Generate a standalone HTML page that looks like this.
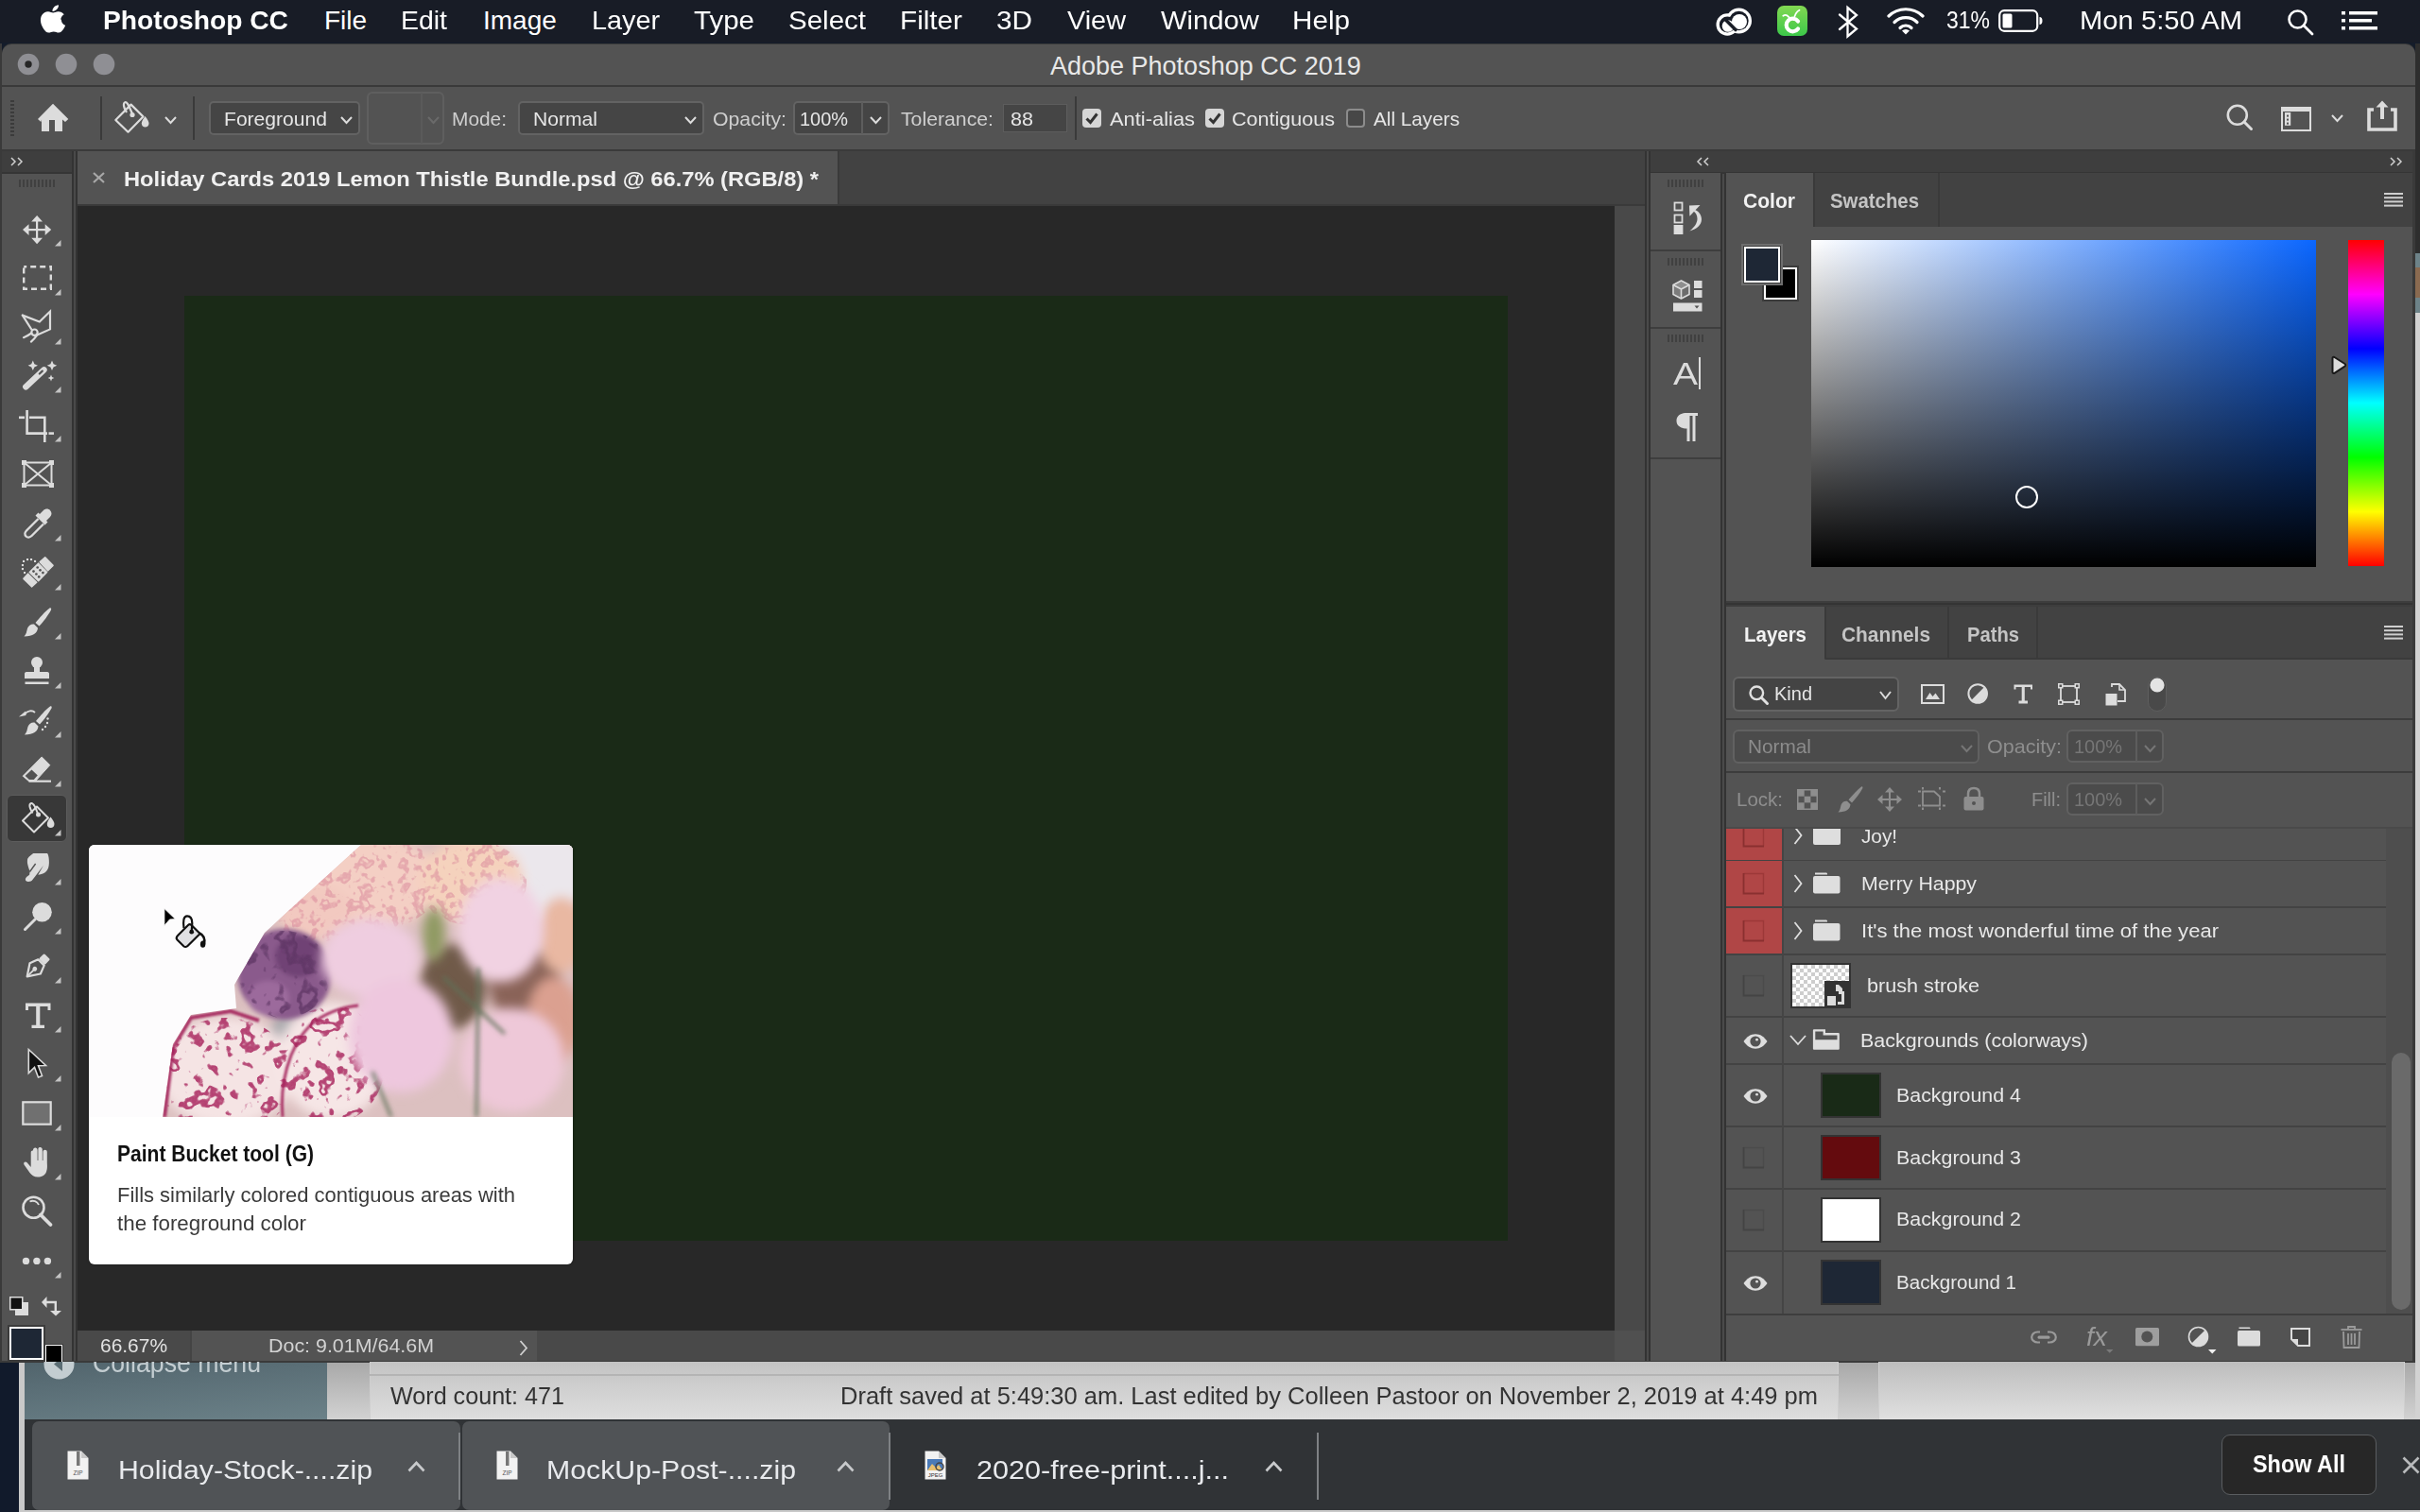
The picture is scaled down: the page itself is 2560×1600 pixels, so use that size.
<!DOCTYPE html>
<html><head><meta charset="utf-8">
<style>
*{margin:0;padding:0;box-sizing:border-box}
html,body{width:2560px;height:1600px;overflow:hidden;background:#141c2a;font-family:"Liberation Sans",sans-serif;position:relative}
.a{position:absolute}
.t{position:absolute;white-space:pre;line-height:1}
svg{position:absolute;overflow:visible}
</style></head><body>
<div class="a" style="left:0px;top:1380px;width:20px;height:220px;background:#111a2b;"></div>
<div class="a" style="left:20px;top:1380px;width:2540px;height:220px;background:#c9c9c9;"></div>
<div class="a" style="left:26px;top:1380px;width:320px;height:122px;background:linear-gradient(175deg,#3e4f57 0%,#5a6e76 60%,#6b8188 100%);"></div>
<div class="a" style="left:346px;top:1380px;width:2214px;height:122px;background:linear-gradient(180deg,#a8a8a8 0%,#a8a8a8 50%,#d2d2d2 100%);"></div>
<div class="a" style="left:26px;top:1502px;width:2534px;height:96px;background:#303336;"></div>
<div class="a" style="left:2px;top:46px;width:2553px;height:1396px;background:#3a3a3a;border-radius:10px 10px 0 0"></div>
<div class="a" style="left:2px;top:47px;width:2553px;height:43px;background:#535353;border-radius:10px 10px 0 0"></div>
<div class="a" style="left:2px;top:92px;width:2553px;height:66px;background:#535353;"></div>
<div class="a" style="left:2px;top:160px;width:74px;height:22px;background:#3e3e3e;"></div>
<div class="a" style="left:2px;top:183px;width:74px;height:1257px;background:#535353;"></div>
<div class="a" style="left:82px;top:160px;width:1658px;height:56px;background:#424242;"></div>
<div class="a" style="left:82px;top:160px;width:804px;height:56px;background:#535353;"></div>
<div class="a" style="left:886px;top:160px;width:2px;height:56px;background:#3a3a3a;"></div>
<div class="a" style="left:82px;top:218px;width:1626px;height:1190px;background:#282828;"></div>
<div class="a" style="left:1708px;top:218px;width:32px;height:1190px;background:#494949;"></div>
<div class="a" style="left:82px;top:1408px;width:1626px;height:32px;background:#494949;"></div>
<div class="a" style="left:1708px;top:1408px;width:32px;height:32px;background:#505050;"></div>
<div class="a" style="left:1740px;top:160px;width:6px;height:1280px;background:#4a4a4a;"></div>
<div class="a" style="left:1740px;top:160px;width:1.6px;height:1280px;background:#333333;"></div>
<div class="a" style="left:1744.4px;top:160px;width:1.6px;height:1280px;background:#333333;"></div>
<div class="a" style="left:1820px;top:183px;width:6px;height:1257px;background:#4a4a4a;"></div>
<div class="a" style="left:1820px;top:183px;width:1.6px;height:1257px;background:#333333;"></div>
<div class="a" style="left:1824.4px;top:183px;width:1.6px;height:1257px;background:#333333;"></div>
<div class="a" style="left:1746px;top:160px;width:806px;height:22px;background:#3e3e3e;"></div>
<div class="a" style="left:1746px;top:182px;width:806px;height:1.8px;background:#353535;"></div>
<div class="a" style="left:2px;top:182px;width:74px;height:1.8px;background:#353535;"></div>
<div class="a" style="left:76px;top:160px;width:6px;height:1280px;background:#4a4a4a;"></div>
<div class="a" style="left:76px;top:160px;width:1.6px;height:1280px;background:#333333;"></div>
<div class="a" style="left:80.4px;top:160px;width:1.6px;height:1280px;background:#333333;"></div>
<div class="a" style="left:1746px;top:160px;width:74px;height:22px;background:#3e3e3e;"></div>
<div class="a" style="left:1746px;top:183px;width:74px;height:1257px;background:#535353;"></div>
<div class="a" style="left:1826px;top:160px;width:726px;height:22px;background:#3e3e3e;"></div>
<div class="a" style="left:0px;top:0px;width:2560px;height:45px;background:#181c26;"></div>
<svg style="left:41px;top:3px;" width="29" height="33" viewBox="0 0 29 33"><path transform="translate(-1.2,0.2) scale(1.1,1.0)" fill="#fff" d="M22.3 17.5c0-3.6 3-5.4 3.1-5.5-1.7-2.5-4.3-2.8-5.2-2.9-2.2-.2-4.3 1.3-5.4 1.3-1.1 0-2.8-1.3-4.7-1.3C7.7 9.2 5.4 10.6 4.1 12.9 1.5 17.4 3.4 24.1 6 27.7c1.2 1.8 2.7 3.8 4.6 3.7 1.9-.1 2.6-1.2 4.8-1.2 2.3 0 2.9 1.2 4.8 1.2 2 0 3.3-1.8 4.5-3.6 1.4-2.1 2-4.1 2-4.2-.1 0-3.9-1.5-3.9-6.1zM18.6 6.6c1-1.2 1.7-2.9 1.5-4.6-1.5.1-3.2 1-4.3 2.2-.9 1.1-1.8 2.8-1.5 4.5 1.6.1 3.3-.9 4.3-2.1z"/></svg>
<div class="t" style="left:109px;top:8.30px;font-size:28px;color:#ffffff;font-weight:700;font-family:'Liberation Sans',sans-serif;transform:scaleX(1.0081);transform-origin:0 0;">Photoshop CC</div>
<div class="t" style="left:343px;top:8.30px;font-size:28px;color:#ffffff;font-weight:400;font-family:'Liberation Sans',sans-serif;">File</div>
<div class="t" style="left:424px;top:8.30px;font-size:28px;color:#ffffff;font-weight:400;font-family:'Liberation Sans',sans-serif;transform:scaleX(1.0155);transform-origin:0 0;">Edit</div>
<div class="t" style="left:511px;top:8.30px;font-size:28px;color:#ffffff;font-weight:400;font-family:'Liberation Sans',sans-serif;">Image</div>
<div class="t" style="left:626px;top:8.30px;font-size:28px;color:#ffffff;font-weight:400;font-family:'Liberation Sans',sans-serif;transform:scaleX(1.0279);transform-origin:0 0;">Layer</div>
<div class="t" style="left:734px;top:8.30px;font-size:28px;color:#ffffff;font-weight:400;font-family:'Liberation Sans',sans-serif;transform:scaleX(1.0543);transform-origin:0 0;">Type</div>
<div class="t" style="left:834px;top:8.30px;font-size:28px;color:#ffffff;font-weight:400;font-family:'Liberation Sans',sans-serif;transform:scaleX(1.0536);transform-origin:0 0;">Select</div>
<div class="t" style="left:952px;top:8.30px;font-size:28px;color:#ffffff;font-weight:400;font-family:'Liberation Sans',sans-serif;transform:scaleX(1.0605);transform-origin:0 0;">Filter</div>
<div class="t" style="left:1054px;top:8.30px;font-size:28px;color:#ffffff;font-weight:400;font-family:'Liberation Sans',sans-serif;transform:scaleX(1.0615);transform-origin:0 0;">3D</div>
<div class="t" style="left:1129px;top:8.30px;font-size:28px;color:#ffffff;font-weight:400;font-family:'Liberation Sans',sans-serif;transform:scaleX(1.0301);transform-origin:0 0;">View</div>
<div class="t" style="left:1228px;top:8.30px;font-size:28px;color:#ffffff;font-weight:400;font-family:'Liberation Sans',sans-serif;transform:scaleX(1.0442);transform-origin:0 0;">Window</div>
<div class="t" style="left:1367px;top:8.30px;font-size:28px;color:#ffffff;font-weight:400;font-family:'Liberation Sans',sans-serif;transform:scaleX(1.0591);transform-origin:0 0;">Help</div>
<div class="t" style="left:2059px;top:9.14px;font-size:25px;color:#ffffff;font-weight:400;font-family:'Liberation Sans',sans-serif;transform:scaleX(0.9191);transform-origin:0 0;">31%</div>
<div class="t" style="left:2200px;top:8.30px;font-size:28px;color:#ffffff;font-weight:400;font-family:'Liberation Sans',sans-serif;transform:scaleX(1.0425);transform-origin:0 0;">Mon 5:50 AM</div>
<svg style="left:1815px;top:9px;" width="39" height="29" viewBox="0 0 39 29"><g><circle cx="12.3" cy="17" r="11.8" fill="#fff"/><circle cx="24.5" cy="13" r="13.5" fill="#fff"/><circle cx="12.3" cy="17" r="8.5" fill="#181c26"/><circle cx="24.5" cy="13" r="10.2" fill="#181c26"/><circle cx="13" cy="18.5" r="6.3" fill="#fff"/><circle cx="25" cy="14" r="8" fill="#fff"/><path d="M11 12.5 L21 22.5" stroke="#181c26" stroke-width="3.6" stroke-linecap="round"/></g></svg>
<div class="a" style="left:1880px;top:6px;width:32px;height:32px;background:linear-gradient(180deg,#82d852,#3cc84a);border-radius:7px"></div>
<svg style="left:1880px;top:6px;" width="32" height="32" viewBox="0 0 32 32"><path d="M22 16.5 A6.8 6.8 0 1 0 22 24.5" fill="none" stroke="#fff" stroke-width="4.2" stroke-linecap="round"/><path d="M6.3 10.8 C9 9 12 10 14 15 M17.5 15 C18.5 10 21 6 23.5 4.8" fill="none" stroke="#fff" stroke-width="1.8" stroke-linecap="round"/></svg>
<svg style="left:1945px;top:7px;" width="20" height="33" viewBox="0 0 20 33"><path d="M1 8.5 L19 23.5 L9.5 31.5 L9.5 1 L19 9 L1 24" fill="none" stroke="#fff" stroke-width="2.3" stroke-linecap="round" stroke-linejoin="miter"/></svg>
<svg style="left:1995px;top:7px;" width="42" height="30" viewBox="0 0 42 30"><g fill="none" stroke="#fff" stroke-width="3.2" stroke-linecap="round"><path d="M3 10 A26 26 0 0 1 39 10"/><path d="M9 16.5 A17 17 0 0 1 33 16.5"/><path d="M15 22.5 A8.5 8.5 0 0 1 27 22.5"/></g><path d="M17 25.5 L21 29.5 L25 25.5 A6 6 0 0 0 17 25.5Z" fill="#fff"/></svg>
<svg style="left:2114px;top:10px;" width="47" height="24" viewBox="0 0 47 24"><rect x="1.2" y="1.2" width="40" height="21.6" rx="5" fill="none" stroke="#fff" stroke-width="2.2"/><rect x="4.5" y="4.5" width="10" height="15" rx="1.5" fill="#fff"/><path d="M43.5 8 Q46.5 8 46.5 12 Q46.5 16 43.5 16Z" fill="#fff"/></svg>
<svg style="left:2419px;top:9px;" width="29" height="28" viewBox="0 0 29 28"><circle cx="11.5" cy="11.5" r="9" fill="none" stroke="#fff" stroke-width="2.6"/><path d="M18 18 L27 27" stroke="#fff" stroke-width="2.8" stroke-linecap="round"/></svg>
<svg style="left:2477px;top:12px;" width="38" height="20" viewBox="0 0 38 20"><g fill="#fff"><rect x="0" y="0" width="4" height="3.5"/><rect x="0" y="8" width="4" height="3.5"/><rect x="0" y="16" width="4" height="3.5"/><rect x="8" y="0" width="30" height="3.5"/><rect x="8" y="8" width="24" height="3.5"/><rect x="8" y="16" width="30" height="3.5"/></g></svg>
<svg style="left:18px;top:56px;" width="24" height="24" viewBox="0 0 24 24"><circle cx="12" cy="12" r="11.3" fill="#8f8f94"/></svg>
<svg style="left:58px;top:56px;" width="24" height="24" viewBox="0 0 24 24"><circle cx="12" cy="12" r="11.3" fill="#8f8f94"/></svg>
<svg style="left:98px;top:56px;" width="24" height="24" viewBox="0 0 24 24"><circle cx="12" cy="12" r="11.3" fill="#8f8f94"/></svg>
<svg style="left:24px;top:62px;" width="12" height="12" viewBox="0 0 12 12"><circle cx="6" cy="6" r="3.7" fill="#262626"/></svg>
<div class="t" style="left:1111px;top:57.14px;font-size:27px;color:#e8e8e8;font-weight:400;font-family:'Liberation Sans',sans-serif;">Adobe Photoshop CC 2019</div>
<div class="a" style="left:11px;top:106px;width:4px;height:38px;background:repeating-linear-gradient(180deg,#3b3b3b 0 2.5px,transparent 2.5px 4px)"></div>
<svg style="left:40px;top:109px;" width="33" height="31" viewBox="0 0 33 31"><path d="M16 0.7 L32.3 17 L29 20 L26 17.5 L26 30 L18 30 L18 18 L12 18 L12 30 L4 30 L4 17.5 L3.3 20 L0 17 Z" fill="#dcdcdc"/></svg>
<div class="a" style="left:106px;top:102px;width:2px;height:46px;background:#3a3a3a;"></div>
<svg style="left:120px;top:106px;" width="40" height="36" viewBox="0 0 40 36"><g fill="none" stroke="#dcdcdc" stroke-width="2.2" stroke-linejoin="round"><path d="M2.3 21 L18.6 4.6 L31.4 17.4 L15.5 33.7 Z"/><path d="M20 14.5 C18 10 16.5 6 15 4 C12.8 1 10.5 2 11 6 C11.4 9 13 11 14 13"/></g><circle cx="20" cy="15.5" r="2.6" fill="#dcdcdc"/><path d="M33.5 17 C36 20 37.5 22.5 37.5 24.5 C37.5 27 35.8 28.5 33.6 28.5 C31.4 28.5 29.8 27 29.8 24.5 C29.8 22.5 31.2 20 33.5 17Z" fill="#dcdcdc"/></svg>
<svg style="left:174px;top:123px;" width="13" height="8" viewBox="0 0 13 8"><path d="M1 1 L6.5 7 L12 1" fill="none" stroke="#dcdcdc" stroke-width="2"/></svg>
<div class="a" style="left:204px;top:102px;width:2px;height:46px;background:#3a3a3a;"></div>
<div class="a" style="left:221px;top:107px;width:160px;height:36px;background:#454545;border:2px solid #636363;border-radius:5px;"></div>
<div class="t" style="left:237px;top:114.72px;font-size:21px;color:#e6e6e6;font-weight:400;font-family:'Liberation Sans',sans-serif;transform:scaleX(1.0039);transform-origin:0 0;">Foreground</div>
<svg style="left:360px;top:123px;" width="13" height="8" viewBox="0 0 13 8"><path d="M1 1 L6.5 7 L12 1" fill="none" stroke="#dcdcdc" stroke-width="2"/></svg>
<div class="a" style="left:388px;top:97px;width:82px;height:56px;background:#535353;border:2px solid #5f5f5f;border-radius:6px;"></div>
<div class="a" style="left:445px;top:98px;width:2px;height:54px;background:#5a5a5a;"></div>
<svg style="left:452px;top:123px;" width="13" height="8" viewBox="0 0 13 8"><path d="M1 1 L6.5 7 L12 1" fill="none" stroke="#6a6a6a" stroke-width="2"/></svg>
<div class="t" style="left:478px;top:114.72px;font-size:21px;color:#cfcfcf;font-weight:400;font-family:'Liberation Sans',sans-serif;transform:scaleX(0.9936);transform-origin:0 0;">Mode:</div>
<div class="a" style="left:548px;top:107px;width:197px;height:36px;background:#454545;border:2px solid #636363;border-radius:5px;"></div>
<div class="t" style="left:564px;top:114.72px;font-size:21px;color:#e6e6e6;font-weight:400;font-family:'Liberation Sans',sans-serif;transform:scaleX(1.0046);transform-origin:0 0;">Normal</div>
<svg style="left:724px;top:123px;" width="13" height="8" viewBox="0 0 13 8"><path d="M1 1 L6.5 7 L12 1" fill="none" stroke="#dcdcdc" stroke-width="2"/></svg>
<div class="t" style="left:754px;top:114.72px;font-size:21px;color:#cfcfcf;font-weight:400;font-family:'Liberation Sans',sans-serif;transform:scaleX(1.0126);transform-origin:0 0;">Opacity:</div>
<div class="a" style="left:839px;top:107px;width:102px;height:36px;background:#454545;border:2px solid #636363;border-radius:5px;"></div>
<div class="a" style="left:911px;top:108px;width:2px;height:34px;background:#5d5d5d;"></div>
<div class="t" style="left:846px;top:114.72px;font-size:21px;color:#e6e6e6;font-weight:400;font-family:'Liberation Sans',sans-serif;transform:scaleX(0.9494);transform-origin:0 0;">100%</div>
<svg style="left:920px;top:123px;" width="13" height="8" viewBox="0 0 13 8"><path d="M1 1 L6.5 7 L12 1" fill="none" stroke="#dcdcdc" stroke-width="2"/></svg>
<div class="t" style="left:953px;top:114.72px;font-size:21px;color:#cfcfcf;font-weight:400;font-family:'Liberation Sans',sans-serif;transform:scaleX(1.0114);transform-origin:0 0;">Tolerance:</div>
<div class="a" style="left:1061px;top:110px;width:68px;height:30px;background:#454545;border:1.5px solid #5d5d5d"></div>
<div class="t" style="left:1069px;top:114.72px;font-size:21px;color:#e6e6e6;font-weight:400;font-family:'Liberation Sans',sans-serif;transform:scaleX(1.0274);transform-origin:0 0;">88</div>
<div class="a" style="left:1137px;top:102px;width:2px;height:46px;background:#3a3a3a;"></div>
<div class="a" style="left:1145px;top:115px;width:20px;height:20px;background:#d6d6d6;border-radius:4px"></div>
<svg style="left:1145px;top:115px;" width="20" height="20" viewBox="0 0 20 20"><path d="M4.5 10.5 L8.5 14.5 L15.5 5.5" fill="none" stroke="#333" stroke-width="3"/></svg>
<div class="t" style="left:1174px;top:114.72px;font-size:21px;color:#e6e6e6;font-weight:400;font-family:'Liberation Sans',sans-serif;transform:scaleX(1.0420);transform-origin:0 0;">Anti-alias</div>
<div class="a" style="left:1275px;top:115px;width:20px;height:20px;background:#d6d6d6;border-radius:4px"></div>
<svg style="left:1275px;top:115px;" width="20" height="20" viewBox="0 0 20 20"><path d="M4.5 10.5 L8.5 14.5 L15.5 5.5" fill="none" stroke="#333" stroke-width="3"/></svg>
<div class="t" style="left:1303px;top:114.72px;font-size:21px;color:#e6e6e6;font-weight:400;font-family:'Liberation Sans',sans-serif;transform:scaleX(1.0259);transform-origin:0 0;">Contiguous</div>
<div class="a" style="left:1424px;top:115px;width:20px;height:20px;background:#474747;border:2px solid #8c8c8c;border-radius:4px"></div>
<div class="t" style="left:1453px;top:114.72px;font-size:21px;color:#e6e6e6;font-weight:400;font-family:'Liberation Sans',sans-serif;transform:scaleX(0.9870);transform-origin:0 0;">All Layers</div>
<svg style="left:2355px;top:110px;" width="30" height="30" viewBox="0 0 30 30"><circle cx="11.8" cy="11.8" r="10" fill="none" stroke="#dcdcdc" stroke-width="2.6"/><path d="M19 19 L26.5 26.5" stroke="#dcdcdc" stroke-width="3" stroke-linecap="round"/></svg>
<svg style="left:2413px;top:113px;" width="32" height="26" viewBox="0 0 32 26"><rect x="1" y="1" width="30" height="24" fill="none" stroke="#dcdcdc" stroke-width="2"/><rect x="1" y="1" width="30" height="4" fill="#dcdcdc"/><rect x="4" y="6" width="6.2" height="13.8" fill="#dcdcdc"/><g fill="#535353"><rect x="6" y="8.6" width="2" height="2"/><rect x="6" y="12.6" width="2" height="2"/><rect x="6" y="16.6" width="2" height="2"/></g></svg>
<svg style="left:2466px;top:121px;" width="13" height="8" viewBox="0 0 13 8"><path d="M1 1 L6.5 7 L12 1" fill="none" stroke="#dcdcdc" stroke-width="2"/></svg>
<svg style="left:2504px;top:106px;" width="32" height="33" viewBox="0 0 32 33"><path d="M7 10 L2 10 L2 31 L30 31 L30 10 L25 10" fill="none" stroke="#dcdcdc" stroke-width="3.6"/><path d="M16 0.5 L22.5 7.5 L18 7.5 L18 20 L14 20 L14 7.5 L9.5 7.5Z" fill="#dcdcdc"/></svg>
<svg style="left:98px;top:182px;" width="13" height="12" viewBox="0 0 13 12"><path d="M1 1 L12 11 M12 1 L1 11" stroke="#a8a8a8" stroke-width="2.2"/></svg>
<div class="t" style="left:131px;top:179.25px;font-size:22.5px;color:#f0f0f0;font-weight:700;font-family:'Liberation Sans',sans-serif;transform:scaleX(1.0525);transform-origin:0 0;">Holiday Cards 2019 Lemon Thistle Bundle.psd @ 66.7% (RGB/8) *</div>
<svg style="left:11px;top:166px;" width="14" height="10" viewBox="0 0 14 10"><path d="M1 1 L5 5 L1 9 M8 1 L12 5 L8 9" fill="none" stroke="#d0d0d0" stroke-width="1.5"/></svg>
<svg style="left:1795px;top:166px;" width="14" height="10" viewBox="0 0 14 10"><path d="M5 1 L1 5 L5 9 M12 1 L8 5 L12 9" fill="none" stroke="#d0d0d0" stroke-width="1.5"/></svg>
<svg style="left:2528px;top:166px;" width="14" height="10" viewBox="0 0 14 10"><path d="M1 1 L5 5 L1 9 M8 1 L12 5 L8 9" fill="none" stroke="#d0d0d0" stroke-width="1.5"/></svg>
<div class="a" style="left:20px;top:190px;width:38px;height:8px;background:repeating-linear-gradient(90deg,#404040 0 2px,transparent 2px 4px)"></div>
<svg style="left:24px;top:228px;" width="30" height="30" viewBox="0 0 30 30"><g fill="#dcdcdc"><rect x="14" y="4" width="2.2" height="22"/><rect x="4" y="14" width="22" height="2.2"/><path d="M15.1 0 L21 6.5 L9.2 6.5Z M15.1 30.2 L21 23.7 L9.2 23.7Z M0 15.1 L6.5 9.2 L6.5 21Z M30.2 15.1 L23.7 9.2 L23.7 21Z"/></g></svg>
<svg style="left:58px;top:254px;" width="7" height="7" viewBox="0 0 7 7"><path d="M6.5 0 L6.5 6.5 L0 6.5Z" fill="#c4c4c4"/></svg>
<svg style="left:24px;top:281px;" width="31" height="26" viewBox="0 0 31 26"><rect x="1.2" y="1.2" width="28.6" height="23.6" fill="none" stroke="#dcdcdc" stroke-width="2.4" stroke-dasharray="6 4" stroke-dashoffset="3"/></svg>
<svg style="left:58px;top:306px;" width="7" height="7" viewBox="0 0 7 7"><path d="M6.5 0 L6.5 6.5 L0 6.5Z" fill="#c4c4c4"/></svg>
<svg style="left:23px;top:328px;" width="32" height="36" viewBox="0 0 32 36"><g fill="none" stroke="#dcdcdc" stroke-width="2.2" stroke-linejoin="miter" stroke-linecap="round"><path d="M0.8 5.6 L18.8 12.5 L30 1.5 L30 20.4 L16.8 26.3"/><path d="M0.8 5.6 L10.6 21"/><circle cx="13.5" cy="23.7" r="3.2"/><path d="M10.3 24.5 C7.5 26.5 5 28 2 29.2"/><path d="M16.3 26.4 C14.5 29 12.5 31.5 9.9 33.6"/></g></svg>
<svg style="left:58px;top:358px;" width="7" height="7" viewBox="0 0 7 7"><path d="M6.5 0 L6.5 6.5 L0 6.5Z" fill="#c4c4c4"/></svg>
<svg style="left:23px;top:381px;" width="38" height="34" viewBox="0 0 38 34"><path d="M4.3 28.3 L23.5 10.3" stroke="#dcdcdc" stroke-width="6.4" stroke-linecap="round"/><path d="M18.8 14.5 L21.8 11.6" stroke="#535353" stroke-width="2.2" stroke-linecap="round"/><g fill="#dcdcdc"><path d="M11.8 0.6 L13.4 4.2 L17 5.8 L13.4 7.4 L11.8 11 L10.2 7.4 L6.6 5.8 L10.2 4.2Z"/><path d="M32 0.6 L33.6 4.2 L37.2 5.8 L33.6 7.4 L32 11 L30.4 7.4 L26.8 5.8 L30.4 4.2Z"/><path d="M31 15.6 L32 18 L34.4 19 L32 20 L31 22.4 L30 20 L27.6 19 L30 18Z"/></g></svg>
<svg style="left:58px;top:409px;" width="7" height="7" viewBox="0 0 7 7"><path d="M6.5 0 L6.5 6.5 L0 6.5Z" fill="#c4c4c4"/></svg>
<svg style="left:20px;top:434px;" width="38" height="34" viewBox="0 0 38 34"><g fill="none" stroke="#dcdcdc" stroke-width="2.6"><path d="M0 7.8 L6 7.8"/><path d="M8.6 0 L8.6 24.6 L30 24.6"/><path d="M11 7.8 L27.3 7.8 L27.3 34"/><path d="M31.5 24.6 L37 24.6"/></g></svg>
<svg style="left:58px;top:461px;" width="7" height="7" viewBox="0 0 7 7"><path d="M6.5 0 L6.5 6.5 L0 6.5Z" fill="#c4c4c4"/></svg>
<svg style="left:23px;top:487px;" width="34" height="29" viewBox="0 0 34 29"><g stroke="#dcdcdc" stroke-width="2" fill="none"><rect x="2.5" y="2.5" width="29" height="24"/><path d="M2.5 2.5 L31.5 26.5 M31.5 2.5 L2.5 26.5"/></g><g fill="#dcdcdc"><rect x="0" y="0" width="5" height="5"/><rect x="29" y="0" width="5" height="5"/><rect x="0" y="24" width="5" height="5"/><rect x="29" y="24" width="5" height="5"/></g></svg>
<svg style="left:24px;top:538px;" width="31" height="31" viewBox="0 0 31 31"><g fill="#dcdcdc"><path d="M18 6 L22 2 C24 0 27.5 0 29 2 C31 4 31 7 29 9 L25 13 L26.5 14.5 L23.5 17.5 L13.5 7.5 L16.5 4.5Z"/></g><path d="M16.5 11 L4 23.5 C2 25.5 2 28 3.5 29.5 C5 31 7.5 31 9.5 29 L22 16.5" fill="none" stroke="#dcdcdc" stroke-width="2.4"/></svg>
<svg style="left:58px;top:566px;" width="7" height="7" viewBox="0 0 7 7"><path d="M6.5 0 L6.5 6.5 L0 6.5Z" fill="#c4c4c4"/></svg>
<svg style="left:22px;top:588px;" width="36" height="36" viewBox="0 0 36 36"><g fill="#dcdcdc" stroke="#dcdcdc" stroke-width="1.6" stroke-linejoin="round"><path d="M20.3 6.6 L25.7 1.9 L34 10.4 L28.7 15.8Z"/><path d="M9.3 17.5 L18.6 8.2 L27.6 17.5 L18.6 26.6Z"/><path d="M3 24.4 L7.6 19.2 L16.7 28.2 L11.5 32.8Z"/></g><g fill="#535353"><circle cx="17.7" cy="12.5" r="1.35"/><circle cx="20.5" cy="15.3" r="1.35"/><circle cx="23.4" cy="18.1" r="1.35"/><circle cx="13.5" cy="16.6" r="1.35"/><circle cx="16.4" cy="19.5" r="1.35"/><circle cx="19.2" cy="22.4" r="1.35"/></g><g fill="#dcdcdc"><rect x="2" y="4.9" width="2.1" height="2.1"/><rect x="6" y="3" width="2.1" height="2.1"/><rect x="10" y="3" width="2.1" height="2.1"/><rect x="14" y="4.9" width="2.1" height="2.1"/><rect x="0.9" y="9" width="2.1" height="2.1"/><rect x="0.9" y="13" width="2.1" height="2.1"/><rect x="3" y="17" width="2.1" height="2.1"/></g></svg>
<svg style="left:58px;top:618px;" width="7" height="7" viewBox="0 0 7 7"><path d="M6.5 0 L6.5 6.5 L0 6.5Z" fill="#c4c4c4"/></svg>
<svg style="left:25px;top:643px;" width="30" height="31" viewBox="0 0 30 31"><g fill="#dcdcdc"><path d="M27.5 0.5 C29 0 29.5 1 29 2.5 C26 8 21 15 16.5 19.5 L12.5 16 C17 11 22.5 4 27.5 0.5Z"/><path d="M11 17.5 L15 21.5 C14.5 27 10 30.5 0.5 30.5 C3 28 3 25.5 4 22 C5 19 8 17 11 17.5Z"/></g></svg>
<svg style="left:58px;top:670px;" width="7" height="7" viewBox="0 0 7 7"><path d="M6.5 0 L6.5 6.5 L0 6.5Z" fill="#c4c4c4"/></svg>
<svg style="left:26px;top:695px;" width="27" height="31" viewBox="0 0 27 31"><g fill="#dcdcdc"><circle cx="13" cy="6" r="6"/><rect x="10" y="8" width="6" height="8"/><path d="M2 16 L24 16 C25.5 16 26 17 26 18 L26 23 L0 23 L0 18 C0 17 0.5 16 2 16Z"/><rect x="0.5" y="26.5" width="25" height="2.5"/></g></svg>
<svg style="left:58px;top:722px;" width="7" height="7" viewBox="0 0 7 7"><path d="M6.5 0 L6.5 6.5 L0 6.5Z" fill="#c4c4c4"/></svg>
<svg style="left:20px;top:747px;" width="35" height="32" viewBox="0 0 35 32"><g fill="#dcdcdc"><path d="M33 0.5 C34.5 0 35 1 34.5 2.5 C31.5 8 26.5 15 22 19.5 L18 16 C22.5 11 28 4 33 0.5Z"/><path d="M16.5 17.5 L20.5 21.5 C20 27 15.5 30.5 6 30.5 C8.5 28 8.5 25.5 9.5 22 C10.5 19 13.5 17 16.5 17.5Z"/><path d="M0 11.5 L7 5.5 L7.5 10 Z"/><circle cx="30.5" cy="13.5" r="1.2"/><circle cx="30" cy="18" r="1.2"/><circle cx="28" cy="22" r="1.2"/><circle cx="25" cy="25" r="1.2"/></g><path d="M6 9 C9 5 14 4 17 7" fill="none" stroke="#dcdcdc" stroke-width="1.8"/></svg>
<svg style="left:58px;top:774px;" width="7" height="7" viewBox="0 0 7 7"><path d="M6.5 0 L6.5 6.5 L0 6.5Z" fill="#c4c4c4"/></svg>
<svg style="left:22px;top:799px;" width="34" height="30" viewBox="0 0 34 30"><path d="M22.2 2 L30.8 10.6 L15.6 27.5 L8.3 27.5 L2.2 22.2 Z" fill="#dcdcdc" stroke="#dcdcdc" stroke-width="1" stroke-linejoin="round"/><path d="M11.5 15.5 L17.8 21.5 L13.8 26 L8.9 26 L4.6 22 Z" fill="#535353"/><rect x="8.5" y="26.6" width="23.5" height="2.2" fill="#dcdcdc"/></svg>
<svg style="left:58px;top:826px;" width="7" height="7" viewBox="0 0 7 7"><path d="M6.5 0 L6.5 6.5 L0 6.5Z" fill="#c4c4c4"/></svg>
<div class="a" style="left:7px;top:841px;width:64px;height:50px;background:#383838;border:1.5px solid #5c5c5c;border-radius:6px"></div>
<svg style="left:22px;top:848px;" width="37" height="35" viewBox="0 0 37 35"><g fill="none" stroke="#dcdcdc" stroke-width="2" stroke-linejoin="round"><path d="M2 20.5 L17 5.5 L29 17.5 L14 32.5 Z"/><path d="M18 13 C16.5 9 15 5 13.5 3.5 C11.5 1 9 2 9.5 5.5 C10 8.5 11.5 10.5 12.5 12.5"/></g><circle cx="18.5" cy="14" r="2.5" fill="#dcdcdc"/><path d="M31.5 16.5 C34 19.5 35.5 22 35.5 24 C35.5 26.5 33.8 28 31.6 28 C29.4 28 27.8 26.5 27.8 24 C27.8 22 29.2 19.5 31.5 16.5Z" fill="#dcdcdc"/></svg>
<svg style="left:58px;top:878px;" width="7" height="7" viewBox="0 0 7 7"><path d="M6.5 0 L6.5 6.5 L0 6.5Z" fill="#c4c4c4"/></svg>
<svg style="left:26px;top:902px;" width="27" height="32" viewBox="0 0 27 32"><path d="M9.2 1 L24.1 1 C25.5 3 26 7 25.9 11 C25.8 15 25 18 23 20 C21 22 18 23.5 14.3 23.7 L20 13.8 L13 23 C11.5 25 10 27 8.8 28.5 C7.5 30.3 6 31 4 31 C2 31 0.7 30 0.9 28.3 C1 26.5 3.5 25 5.1 23.8 L5.7 19.8 C4.5 17.5 3.5 14 3 11.5 C2.8 9 3 7 3.3 6.5 C5 4 7 2.5 9.2 1Z" fill="#dcdcdc"/><path d="M5.5 20.5 L11.6 12" stroke="#535353" stroke-width="1.4"/></svg>
<svg style="left:58px;top:930px;" width="7" height="7" viewBox="0 0 7 7"><path d="M6.5 0 L6.5 6.5 L0 6.5Z" fill="#c4c4c4"/></svg>
<svg style="left:24px;top:955px;" width="31" height="30" viewBox="0 0 31 30"><circle cx="20.5" cy="10.3" r="10.3" fill="#dcdcdc"/><path d="M13 18 L2.5 28.5" stroke="#dcdcdc" stroke-width="3" stroke-linecap="round"/></svg>
<svg style="left:58px;top:982px;" width="7" height="7" viewBox="0 0 7 7"><path d="M6.5 0 L6.5 6.5 L0 6.5Z" fill="#c4c4c4"/></svg>
<svg style="left:26px;top:1008px;" width="29" height="29" viewBox="0 0 29 29"><g transform="rotate(45 14 14)"><path d="M9.5 9 L18.5 9 L22 18 L14 30 L6 18Z" fill="none" stroke="#dcdcdc" stroke-width="2.2" stroke-linejoin="round"/><rect x="9.5" y="0" width="9" height="8" rx="1.5" fill="#dcdcdc"/><path d="M14 19 L14 29" stroke="#dcdcdc" stroke-width="1.8"/><circle cx="14" cy="18.5" r="2.4" fill="#dcdcdc"/></g></svg>
<svg style="left:58px;top:1034px;" width="7" height="7" viewBox="0 0 7 7"><path d="M6.5 0 L6.5 6.5 L0 6.5Z" fill="#c4c4c4"/></svg>
<svg style="left:27px;top:1061px;" width="27" height="28" viewBox="0 0 27 28"><g fill="#dcdcdc"><path d="M0 0.5 L26.5 0.5 L26.5 8 L23.5 8 L23.5 4 L15.3 4 L15.3 23.8 L20 23.8 L20 27 L6.5 27 L6.5 23.8 L11.2 23.8 L11.2 4 L3 4 L3 8 L0 8Z"/></g></svg>
<svg style="left:58px;top:1086px;" width="7" height="7" viewBox="0 0 7 7"><path d="M6.5 0 L6.5 6.5 L0 6.5Z" fill="#c4c4c4"/></svg>
<svg style="left:29px;top:1109px;" width="22" height="34" viewBox="0 0 22 34"><path d="M1.3 1.5 L19.5 18.5 L11.5 18.8 L15.5 29.5 L11.5 31 L7.5 20.5 L1.3 26.5Z" fill="#111" stroke="#dcdcdc" stroke-width="1.6" stroke-linejoin="miter"/></svg>
<svg style="left:58px;top:1138px;" width="7" height="7" viewBox="0 0 7 7"><path d="M6.5 0 L6.5 6.5 L0 6.5Z" fill="#c4c4c4"/></svg>
<svg style="left:23px;top:1165px;" width="32" height="26" viewBox="0 0 32 26"><rect x="1.3" y="1.3" width="29.4" height="23.4" fill="#707070" stroke="#dcdcdc" stroke-width="2.2"/></svg>
<svg style="left:58px;top:1190px;" width="7" height="7" viewBox="0 0 7 7"><path d="M6.5 0 L6.5 6.5 L0 6.5Z" fill="#c4c4c4"/></svg>
<svg style="left:25px;top:1214px;" width="28" height="32" viewBox="0 0 28 32"><g fill="#dcdcdc"><path d="M10 3 C10 1.5 11 0.5 12.3 0.5 C13.6 0.5 14.6 1.5 14.6 3 L14.6 14 L15.4 14 L15.4 2 C15.4 0.5 16.4 0 17.6 0 C18.8 0 19.8 1 19.8 2.5 L19.8 14 L20.5 14 L20.5 5 C20.5 3.5 21.5 2.8 22.6 2.8 C23.8 2.8 24.8 3.5 24.8 5 L24.8 16 C24.8 19 25.5 22 24 26 C22.5 30 19 31.5 15 31.5 C11 31.5 8.5 29.5 6.5 27 L0.5 18.5 C-0.3 17.2 0.3 15.5 2 15.5 C3 15.5 4 16.5 4.5 17.2 L7.7 21 L7.7 5.5 C7.7 4.3 8.6 3.6 9.6 3.6 Z"/></g></svg>
<svg style="left:58px;top:1242px;" width="7" height="7" viewBox="0 0 7 7"><path d="M6.5 0 L6.5 6.5 L0 6.5Z" fill="#c4c4c4"/></svg>
<svg style="left:22px;top:1265px;" width="34" height="34" viewBox="0 0 34 34"><circle cx="13.5" cy="12.7" r="11" fill="none" stroke="#dcdcdc" stroke-width="2.6"/><path d="M9.5 6.5 A7 7 0 0 1 19 10" fill="none" stroke="#dcdcdc" stroke-width="1.8"/><path d="M21 20.5 L31.5 31" stroke="#dcdcdc" stroke-width="3.8" stroke-linecap="round"/></svg>
<svg style="left:23px;top:1330px;" width="32" height="9" viewBox="0 0 32 9"><g fill="#dcdcdc"><circle cx="4.5" cy="4.4" r="3.7"/><circle cx="15.9" cy="4.4" r="3.7"/><circle cx="27.4" cy="4.4" r="3.7"/></g></svg>
<svg style="left:58px;top:1346px;" width="7" height="7" viewBox="0 0 7 7"><path d="M6.5 0 L6.5 6.5 L0 6.5Z" fill="#c4c4c4"/></svg>
<svg style="left:10px;top:1372px;" width="21" height="21" viewBox="0 0 21 21"><rect x="6" y="6" width="14" height="14" fill="#dcdcdc"/><rect x="0.75" y="0.75" width="13" height="13" fill="#111" stroke="#dcdcdc" stroke-width="1.5"/></svg>
<svg style="left:44px;top:1372px;" width="21" height="21" viewBox="0 0 21 21"><g fill="#dcdcdc"><path d="M0 6 L5.5 0 L5.5 4.8 L16 4.8 L16 15 L21 15 L15 20.5 L9 15 L13.6 15 L13.6 7.2 L5.5 7.2 L5.5 12Z"/></g></svg>
<div class="a" style="left:47px;top:1422px;width:20px;height:19px;background:#3b3b3b;"></div>
<div class="a" style="left:47.5px;top:1423px;width:18px;height:18px;background:#000;border:1.6px solid #fff;border-bottom:none"></div>
<div class="a" style="left:8px;top:1402px;width:40px;height:39px;background:#3b3b3b;"></div>
<div class="a" style="left:10px;top:1404px;width:36px;height:35px;background:#1e2735;border:2.2px solid #fff"></div>
<div class="a" style="left:0px;top:46px;width:2px;height:1396px;background:#3a3a3a;"></div>
<div class="a" style="left:195px;top:313px;width:1400px;height:1000px;background:#1a2a17;"></div>
<div class="a" style="left:82px;top:1408px;width:120px;height:32px;background:#494949;"></div>
<div class="a" style="left:201px;top:1408px;width:2px;height:32px;background:#444444;"></div>
<div class="a" style="left:203px;top:1408px;width:365px;height:32px;background:#535353;"></div>
<div class="t" style="left:106px;top:1413.22px;font-size:21px;color:#e2e2e2;font-weight:400;font-family:'Liberation Sans',sans-serif;transform:scaleX(0.9967);transform-origin:0 0;">66.67%</div>
<div class="t" style="left:284px;top:1413.22px;font-size:21px;color:#d2d2d2;font-weight:400;font-family:'Liberation Sans',sans-serif;transform:scaleX(1.0199);transform-origin:0 0;">Doc: 9.01M/64.6M</div>
<svg style="left:549px;top:1418px;" width="10" height="17" viewBox="0 0 10 17"><path d="M1.5 1 L8 8.5 L1.5 16" fill="none" stroke="#d0d0d0" stroke-width="1.8"/></svg>
<div class="a" style="left:94px;top:894px;width:512px;height:444px;background:#ffffff;border-radius:6px;box-shadow:0 0 3px rgba(0,0,0,.35)"></div>
<svg style="left:94px;top:894px;" width="512" height="288" viewBox="0 0 512 288"><defs><filter id="bl" x="-20%" y="-20%" width="140%" height="140%"><feGaussianBlur stdDeviation="6"/></filter>
<filter id="bl2" x="-20%" y="-20%" width="140%" height="140%"><feGaussianBlur stdDeviation="0.8"/></filter>
<filter id="bl3" x="-20%" y="-20%" width="140%" height="140%"><feGaussianBlur stdDeviation="2.5"/></filter>
<filter id="tex" x="0" y="0" width="100%" height="100%"><feTurbulence type="fractalNoise" baseFrequency="0.05" numOctaves="3" seed="7" result="n"/><feColorMatrix in="n" type="matrix" values="0 0 0 0 0  0 0 0 0 0  0 0 0 0 0  1 0 0 0 0" result="a"/><feComponentTransfer in="a" result="b"><feFuncA type="table" tableValues="0 0 0 0 0 0 0.9 1 0.9 0 0 0 0 0 0 0.9 1 0.9 0 0 0 0"/></feComponentTransfer><feFlood flood-color="#a8245c" result="f"/><feComposite in="f" in2="b" operator="in" result="g"/><feComposite in="g" in2="SourceGraphic" operator="in"/></filter>
<filter id="texp" x="0" y="0" width="100%" height="100%"><feTurbulence type="fractalNoise" baseFrequency="0.07" numOctaves="3" seed="13" result="n"/><feColorMatrix in="n" type="matrix" values="0 0 0 0 0  0 0 0 0 0  0 0 0 0 0  1 0 0 0 0" result="a"/><feComponentTransfer in="a" result="b"><feFuncA type="table" tableValues="0 0 0 0 0 0.8 1 0.8 0 0 0 0 0 0.8 1 0.8 0 0 0"/></feComponentTransfer><feFlood flood-color="#d9869a" result="f"/><feComposite in="f" in2="b" operator="in" result="g"/><feComposite in="g" in2="SourceGraphic" operator="in"/><feGaussianBlur stdDeviation="0.6"/></filter>
<filter id="tex3" x="0" y="0" width="100%" height="100%"><feTurbulence type="fractalNoise" baseFrequency="0.045" numOctaves="3" seed="4" result="n"/><feColorMatrix in="n" type="matrix" values="0 0 0 0 0  0 0 0 0 0  0 0 0 0 0  1 0 0 0 0" result="a"/><feComponentTransfer in="a" result="b"><feFuncA type="table" tableValues="0 0 0 0 0 0.6 0.8 0.6 0 0 0 0 0 0.6 0.8 0.6 0 0 0"/></feComponentTransfer><feFlood flood-color="#5e3564" result="f"/><feComposite in="f" in2="b" operator="in" result="g"/><feComposite in="g" in2="SourceGraphic" operator="in"/><feGaussianBlur stdDeviation="0.7"/></filter>
<clipPath id="fc"><path d="M288 0 L512 0 L512 288 L78 288 L89 211 L108 180 L156 173 L154 148 L186 93 L211 70 Z"/></clipPath>
<clipPath id="carn"><ellipse cx="145" cy="245" rx="72" ry="62"/><ellipse cx="258" cy="232" rx="55" ry="62"/></clipPath>
<clipPath id="peach"><ellipse cx="300" cy="40" rx="72" ry="50"/><ellipse cx="405" cy="40" rx="58" ry="45"/><ellipse cx="240" cy="75" rx="40" ry="28"/></clipPath>
<clipPath id="cr"><rect x="0" y="0" width="512" height="300" rx="6"/></clipPath></defs>
<g clip-path="url(#cr)"><rect width="512" height="288" fill="#fdfcfd"/>
<g clip-path="url(#fc)">
<rect width="512" height="288" fill="#dcc0c0"/>
<g filter="url(#bl)">
<ellipse cx="470" cy="30" rx="60" ry="50" fill="#ebe7ec"/>
<ellipse cx="300" cy="40" rx="75" ry="48" fill="#f4cfc4"/>
<ellipse cx="405" cy="38" rx="55" ry="45" fill="#f5d2bd"/>
<ellipse cx="240" cy="72" rx="40" ry="30" fill="#f2c9c0"/>
<ellipse cx="385" cy="150" rx="35" ry="45" fill="#6f5a48"/>
<ellipse cx="462" cy="150" rx="38" ry="40" fill="#8a6458"/>
<ellipse cx="500" cy="95" rx="25" ry="40" fill="#e9b8a2"/>
<ellipse cx="492" cy="185" rx="28" ry="45" fill="#dba090"/>
<ellipse cx="215" cy="195" rx="22" ry="16" fill="#a3a6aa"/>
<ellipse cx="145" cy="240" rx="72" ry="58" fill="#f5e4e4"/>
<ellipse cx="258" cy="228" rx="58" ry="62" fill="#f6e6e6"/>
</g>
<rect x="60" y="165" width="270" height="123" fill="#000" filter="url(#tex)" clip-path="url(#carn)" opacity=".85"/>
<rect x="180" y="0" width="300" height="110" fill="#000" filter="url(#texp)" clip-path="url(#peach)" opacity=".55"/>
<g filter="url(#bl3)">
<ellipse cx="207" cy="137" rx="50" ry="48" fill="#8a5a8c"/>
<ellipse cx="222" cy="118" rx="25" ry="22" fill="#6f4274"/>
<ellipse cx="190" cy="162" rx="22" ry="18" fill="#9c6a9c"/>
</g>
<ellipse cx="207" cy="137" rx="48" ry="46" fill="#000" filter="url(#tex3)"/>
<g filter="url(#bl)">
<ellipse cx="298" cy="120" rx="52" ry="42" fill="#efcde0"/>
<ellipse cx="330" cy="202" rx="55" ry="60" fill="#eec7de"/>
<ellipse cx="436" cy="90" rx="45" ry="55" fill="#f1d2e2"/>
<ellipse cx="448" cy="228" rx="55" ry="55" fill="#eec8d8"/>
<ellipse cx="365" cy="95" rx="12" ry="28" fill="#8f9a62"/>
</g>
<g filter="url(#bl2)" fill="none" stroke="#a3205a" stroke-linejoin="round" opacity=".9">
<path d="M80 288 L89 215 L108 183 L150 176 L180 186" stroke-width="4"/>
<path d="M205 288 C202 255 210 215 235 190 C250 178 265 172 285 170" stroke-width="3"/>
</g>
<g filter="url(#bl3)" fill="none" stroke="#5f7158" stroke-width="3">
<path d="M410 288 L412 130"/><path d="M320 288 L300 240"/><path d="M375 140 L440 200"/>
</g>
</g></g></svg>
<svg style="left:170px;top:958px;" width="50" height="48" viewBox="0 0 50 48"><path d="M3.9 3.5 L15.4 14.6 L9.5 14.9 L3.9 21.4 Z" fill="#000" stroke="#fff" stroke-width="0.8"/><path d="M18.5 31.5 L29 21 C30 20 31.5 20 32.5 21 L41.6 30 L28.5 43 C27.5 44 25.5 44.3 24.3 43.2 L17.5 36.5 C16.3 35.3 16.5 33.5 18.5 31.5 Z" fill="#e0e0e3" stroke="#111" stroke-width="2.2" stroke-linejoin="round"/><path d="M24.5 24 C23.6 17 24 11.4 28 11.4 C32 11.4 33.3 15 33.3 19 L32.7 27.5" fill="none" stroke="#111" stroke-width="2.2"/><circle cx="32.7" cy="28.2" r="2.4" fill="#111"/><path d="M41 29.5 C45.5 31.5 47 35.5 46 41" fill="none" stroke="#111" stroke-width="2.6"/><ellipse cx="44.6" cy="41.2" rx="2.7" ry="3.6" fill="#111"/></svg>
<div class="t" style="left:124px;top:1210.03px;font-size:23px;color:#111111;font-weight:700;font-family:'Liberation Sans',sans-serif;transform:scaleX(0.9145);transform-origin:0 0;">Paint Bucket tool (G)</div>
<div class="t" style="left:124px;top:1254.80px;font-size:21.5px;color:#3a3a3a;font-weight:400;font-family:'Liberation Sans',sans-serif;transform:scaleX(1.0212);transform-origin:0 0;">Fills similarly colored contiguous areas with</div>
<div class="t" style="left:124px;top:1285.10px;font-size:21.5px;color:#3a3a3a;font-weight:400;font-family:'Liberation Sans',sans-serif;transform:scaleX(1.0393);transform-origin:0 0;">the foreground color</div>
<div class="a" style="left:1746px;top:264px;width:74px;height:2px;background:#3e3e3e;"></div>
<div class="a" style="left:1746px;top:346px;width:74px;height:2px;background:#3e3e3e;"></div>
<div class="a" style="left:1746px;top:484px;width:74px;height:2px;background:#3e3e3e;"></div>
<div class="a" style="left:1764px;top:190px;width:38px;height:8px;background:repeating-linear-gradient(90deg,#404040 0 2px,transparent 2px 4px)"></div>
<div class="a" style="left:1764px;top:273px;width:38px;height:8px;background:repeating-linear-gradient(90deg,#404040 0 2px,transparent 2px 4px)"></div>
<div class="a" style="left:1764px;top:354px;width:38px;height:8px;background:repeating-linear-gradient(90deg,#404040 0 2px,transparent 2px 4px)"></div>
<svg style="left:1770px;top:213px;" width="31" height="36" viewBox="0 0 31 36"><g fill="none" stroke="#dcdcdc" stroke-width="1.8"><rect x="1.5" y="1.5" width="8" height="8"/><rect x="1.5" y="14.5" width="8" height="8"/></g><rect x="0.6" y="25" width="9.8" height="10" fill="#dcdcdc"/><path d="M17 4.6 L28.5 4 L17.4 15.7 Z" fill="#dcdcdc"/><path d="M20.5 8 C26.5 9.5 30 14 30 19 C30 25 25 29.5 17.4 31.4 C22.5 27.5 25.5 23 25.5 18.5 C25.5 15 24 12 21.5 10.5 Z" fill="#dcdcdc"/></svg>
<svg style="left:1769px;top:296px;" width="32" height="34" viewBox="0 0 32 34"><path d="M9.5 1 L18 5.5 L9.5 10 L1 5.5Z" fill="#8e8e8e"/><path d="M1 5.5 L9.5 10 L9.5 20 L1 15.5Z" fill="#7c7c7c"/><path d="M9.5 10 L18 5.5 L18 15.5 L9.5 20Z" fill="#6c6c6c"/><g stroke="#dcdcdc" stroke-width="1.6" fill="none" stroke-linejoin="round"><path d="M9.5 1 L18 5.5 L18 15.5 L9.5 20 L1 15.5 L1 5.5Z"/><path d="M1 5.5 L9.5 10 L18 5.5 M9.5 10 L9.5 20"/></g><rect x="23" y="1" width="8.5" height="8" fill="#dcdcdc"/><rect x="23" y="11" width="8.5" height="8" fill="#dcdcdc"/><rect x="1" y="24.5" width="30.5" height="9" fill="#dcdcdc"/><path d="M23.5 27.5 L28.5 27.5 L26 30.5Z" fill="#535353"/></svg>
<div class="t" style="left:1770px;top:378.57px;font-size:33px;color:#dcdcdc;font-weight:400;font-family:'Liberation Sans',sans-serif;transform:scaleX(1.1810);transform-origin:0 0;">A</div>
<div class="a" style="left:1797px;top:378px;width:2.2px;height:34px;background:#dcdcdc;"></div>
<svg style="left:1773px;top:436px;" width="24" height="32" viewBox="0 0 24 32"><path d="M11 1 L23 1 L23 4 L20.5 4 L20.5 31 L17.5 31 L17.5 4 L14.5 4 L14.5 31 L11.5 31 L11.5 17.5 C5 17.5 0.5 14.5 0.5 9.2 C0.5 4 5 1 11 1Z" fill="#dcdcdc"/></svg>
<div class="a" style="left:1826px;top:183px;width:726px;height:57px;background:#424242;"></div>
<div class="a" style="left:1826px;top:183px;width:93px;height:57px;background:#535353;"></div>
<div class="a" style="left:2050px;top:183px;width:2px;height:57px;background:#3a3a3a;"></div>
<div class="a" style="left:1918px;top:183px;width:2px;height:57px;background:#3a3a3a;"></div>
<div class="t" style="left:1844px;top:202.38px;font-size:22px;color:#f2f2f2;font-weight:700;font-family:'Liberation Sans',sans-serif;transform:scaleX(0.9573);transform-origin:0 0;">Color</div>
<div class="t" style="left:1936px;top:202.38px;font-size:22px;color:#c4c4c4;font-weight:700;font-family:'Liberation Sans',sans-serif;transform:scaleX(0.9261);transform-origin:0 0;">Swatches</div>
<svg style="left:2522px;top:204px;" width="20" height="15" viewBox="0 0 20 15"><g fill="#cfcfcf"><rect y="0" width="20" height="2"/><rect y="4.2" width="20" height="2"/><rect y="8.4" width="20" height="2"/><rect y="12.6" width="20" height="2"/></g></svg>
<div class="a" style="left:1826px;top:240px;width:726px;height:396px;background:#535353;"></div>
<div class="a" style="left:1826px;top:636px;width:726px;height:6px;background:#3d3d3d;"></div>
<div class="a" style="left:1826px;top:638px;width:726px;height:2px;background:#343434;"></div>
<div class="a" style="left:1864px;top:281px;width:39px;height:38px;background:#3b3b3b;"></div>
<div class="a" style="left:1866px;top:283px;width:35px;height:34px;background:#000;border:2px solid #fff"></div>
<div class="a" style="left:1842px;top:258px;width:44px;height:44px;background:#6e6e6e;"></div>
<div class="a" style="left:1844px;top:260px;width:40px;height:40px;background:#3b3b3b;"></div>
<div class="a" style="left:1845px;top:261px;width:38px;height:38px;background:#1e2735;border:2.2px solid #fff"></div>
<div class="a" style="left:1916px;top:254px;width:534px;height:346px;background:linear-gradient(to top,#000 0%,rgba(0,0,0,0) 100%),linear-gradient(to right,#ffffff 0%,#0a66ff 100%);"></div>
<svg style="left:2132px;top:514px;" width="24" height="24" viewBox="0 0 24 24"><circle cx="12" cy="12" r="11" fill="none" stroke="#fff" stroke-width="2"/></svg>
<div class="a" style="left:2484px;top:254px;width:38px;height:345px;background:linear-gradient(to bottom,#ff0000 0%,#ff00ff 16.67%,#0000ff 33.33%,#00ffff 50%,#00ff00 66.67%,#ffff00 83.33%,#ff0000 100%);"></div>
<svg style="left:2464px;top:377px;" width="19" height="19" viewBox="0 0 19 19"><path d="M3.5 2 C3.5 1 4.5 0.5 5.5 1 L16.5 8 C17.5 8.7 17.5 10 16.5 10.7 L5.5 17.8 C4.5 18.4 3.5 17.8 3.5 16.8 Z" fill="#dddddd" stroke="#1a1a1a" stroke-width="2" stroke-linejoin="round"/></svg>
<div class="a" style="left:1826px;top:642px;width:726px;height:56px;background:#424242;"></div>
<div class="a" style="left:1931px;top:696px;width:621px;height:2px;background:#3a3a3a;"></div>
<div class="a" style="left:1826px;top:642px;width:104px;height:56px;background:#535353;"></div>
<div class="a" style="left:1930px;top:642px;width:2px;height:55px;background:#3a3a3a;"></div>
<div class="a" style="left:2060px;top:642px;width:2px;height:55px;background:#3a3a3a;"></div>
<div class="a" style="left:2154px;top:642px;width:2px;height:55px;background:#3a3a3a;"></div>
<div class="t" style="left:1845px;top:660.68px;font-size:22px;color:#f2f2f2;font-weight:700;font-family:'Liberation Sans',sans-serif;transform:scaleX(0.9302);transform-origin:0 0;">Layers</div>
<div class="t" style="left:1948px;top:660.68px;font-size:22px;color:#c4c4c4;font-weight:700;font-family:'Liberation Sans',sans-serif;transform:scaleX(0.9492);transform-origin:0 0;">Channels</div>
<div class="t" style="left:2081px;top:660.68px;font-size:22px;color:#c4c4c4;font-weight:700;font-family:'Liberation Sans',sans-serif;transform:scaleX(0.9179);transform-origin:0 0;">Paths</div>
<svg style="left:2522px;top:662px;" width="20" height="15" viewBox="0 0 20 15"><g fill="#cfcfcf"><rect y="0" width="20" height="2"/><rect y="4.2" width="20" height="2"/><rect y="8.4" width="20" height="2"/><rect y="12.6" width="20" height="2"/></g></svg>
<div class="a" style="left:1826px;top:698px;width:726px;height:742px;background:#535353;"></div>
<div class="a" style="left:1826px;top:760px;width:726px;height:2px;background:#3c3c3c;"></div>
<div class="a" style="left:1826px;top:816px;width:726px;height:2px;background:#3c3c3c;"></div>
<div class="a" style="left:1833px;top:716px;width:176px;height:37px;background:#444444;border:2px solid #646464;border-radius:6px;"></div>
<svg style="left:1850px;top:725px;" width="22" height="21" viewBox="0 0 22 21"><circle cx="8.3" cy="8.3" r="6.8" fill="none" stroke="#e0e0e0" stroke-width="2.4"/><path d="M13.3 13.3 L19.5 19.5" stroke="#e0e0e0" stroke-width="3" stroke-linecap="round"/></svg>
<div class="t" style="left:1877px;top:723.22px;font-size:21px;color:#e6e6e6;font-weight:400;font-family:'Liberation Sans',sans-serif;transform:scaleX(0.9517);transform-origin:0 0;">Kind</div>
<svg style="left:1988px;top:731px;" width="13" height="9" viewBox="0 0 13 9"><path d="M1 1 L6.5 8 L12 1" fill="none" stroke="#dcdcdc" stroke-width="2"/></svg>
<svg style="left:2032px;top:724px;" width="26" height="21" viewBox="0 0 26 21"><rect x="1" y="1" width="23" height="19" fill="none" stroke="#dcdcdc" stroke-width="2"/><path d="M5 16 L9.5 9 L12.5 13 L15.5 9.5 L20 16Z" fill="#dcdcdc"/></svg>
<svg style="left:2081px;top:723px;" width="23" height="22" viewBox="0 0 23 22"><circle cx="11.2" cy="11" r="9.8" fill="none" stroke="#dcdcdc" stroke-width="2"/><path d="M18.1 4 A9.8 9.8 0 0 1 4.3 17.9Z" fill="#dcdcdc"/></svg>
<svg style="left:2130px;top:724px;" width="21" height="21" viewBox="0 0 21 21"><path d="M0.5 0.5 L20 0.5 L20 5.5 L18 5.5 L18 3 L11.8 3 L11.8 17.5 L15 17.5 L15 20.5 L5.5 20.5 L5.5 17.5 L8.7 17.5 L8.7 3 L2.5 3 L2.5 5.5 L0.5 5.5Z" fill="#dcdcdc"/></svg>
<svg style="left:2177px;top:723px;" width="23" height="23" viewBox="0 0 23 23"><rect x="3" y="3" width="17" height="17" fill="none" stroke="#dcdcdc" stroke-width="1.8"/><g fill="#dcdcdc"><rect x="0" y="0" width="5.5" height="5.5"/><rect x="17.5" y="0" width="5.5" height="5.5"/><rect x="0" y="17.5" width="5.5" height="5.5"/><rect x="17.5" y="17.5" width="5.5" height="5.5"/></g><g fill="#535353"><rect x="1.5" y="1.5" width="2.5" height="2.5"/><rect x="19" y="1.5" width="2.5" height="2.5"/><rect x="1.5" y="19" width="2.5" height="2.5"/><rect x="19" y="19" width="2.5" height="2.5"/></g></svg>
<svg style="left:2227px;top:723px;" width="22" height="24" viewBox="0 0 22 24"><path d="M7 4 L7 1 L15 1 L21 7 L21 19 L13 19" fill="none" stroke="#dcdcdc" stroke-width="1.8"/><path d="M15 1 L15 7 L21 7" fill="none" stroke="#dcdcdc" stroke-width="1.6"/><rect x="0.5" y="11" width="12" height="12.5" fill="#dcdcdc"/></svg>
<div class="a" style="left:2272px;top:716px;width:20px;height:37px;background:#494949;border:1.5px solid #5e5e5e;border-radius:10px"></div>
<svg style="left:2274px;top:717px;" width="16" height="16" viewBox="0 0 16 16"><circle cx="8" cy="8" r="7.6" fill="#e4e4e4"/></svg>
<div class="a" style="left:1833px;top:772px;width:261px;height:36px;background:#4b4b4b;border:2px solid #616161;border-radius:6px;"></div>
<div class="t" style="left:1849px;top:779.22px;font-size:21px;color:#8c8c8c;font-weight:400;font-family:'Liberation Sans',sans-serif;transform:scaleX(0.9898);transform-origin:0 0;">Normal</div>
<svg style="left:2074px;top:788px;" width="13" height="8" viewBox="0 0 13 8"><path d="M1 1 L6.5 7 L12 1" fill="none" stroke="#767676" stroke-width="2"/></svg>
<div class="t" style="left:2102px;top:779.22px;font-size:21px;color:#8e8e8e;font-weight:400;font-family:'Liberation Sans',sans-serif;transform:scaleX(1.0256);transform-origin:0 0;">Opacity:</div>
<div class="a" style="left:2186px;top:772px;width:103px;height:35px;background:#4b4b4b;border:2px solid #616161;border-radius:6px;"></div>
<div class="a" style="left:2259px;top:773px;width:2px;height:33px;background:#5d5d5d;"></div>
<div class="t" style="left:2194px;top:779.22px;font-size:21px;color:#767676;font-weight:400;font-family:'Liberation Sans',sans-serif;transform:scaleX(0.9494);transform-origin:0 0;">100%</div>
<svg style="left:2268px;top:788px;" width="13" height="8" viewBox="0 0 13 8"><path d="M1 1 L6.5 7 L12 1" fill="none" stroke="#767676" stroke-width="2"/></svg>
<div class="t" style="left:1837px;top:835.22px;font-size:21px;color:#8e8e8e;font-weight:400;font-family:'Liberation Sans',sans-serif;transform:scaleX(0.9760);transform-origin:0 0;">Lock:</div>
<svg style="left:1901px;top:835px;" width="22" height="22" viewBox="0 0 22 22"><rect x="0.75" y="0.75" width="20.5" height="20.5" fill="none" stroke="#8e8e8e" stroke-width="1.5"/><g fill="#8e8e8e"><rect x="1" y="1" width="6.7" height="6.7"/><rect x="14.3" y="1" width="6.7" height="6.7"/><rect x="7.7" y="7.7" width="6.7" height="6.7"/><rect x="1" y="14.3" width="6.7" height="6.7"/><rect x="14.3" y="14.3" width="6.7" height="6.7"/></g></svg>
<svg style="left:1944px;top:832px;" width="27" height="28" viewBox="0 0 27 28"><g fill="#8e8e8e"><path d="M25 0.5 C26.3 0 26.8 1 26.3 2.3 C23.5 7.5 19 13.5 15 17.5 L11.5 14.3 C15.5 10 20.5 3.8 25 0.5Z"/><path d="M10 15.8 L13.5 19.3 C13 24.3 9 27.5 0.5 27.5 C2.7 25.3 2.7 23 3.6 19.8 C4.5 17 7.2 15.3 10 15.8Z"/></g></svg>
<svg style="left:1986px;top:833px;" width="26" height="26" viewBox="0 0 26 26"><g fill="#8e8e8e"><rect x="12" y="4" width="2" height="18"/><rect x="4" y="12" width="18" height="2"/><path d="M13 0 L18 5.5 L8 5.5Z M13 26 L18 20.5 L8 20.5Z M0 13 L5.5 8 L5.5 18Z M26 13 L20.5 8 L20.5 18Z"/></g></svg>
<svg style="left:2029px;top:833px;" width="29" height="24" viewBox="0 0 29 24"><g fill="none" stroke="#8e8e8e" stroke-width="1.8"><path d="M5 4.5 L17 4.5 L23 10 L23 19.5 L5 19.5Z"/></g><g fill="#8e8e8e"><rect x="0" y="3.5" width="3" height="2"/><rect x="26" y="3.5" width="3" height="2"/><rect x="0" y="18.5" width="3" height="2"/><rect x="26" y="18.5" width="3" height="2"/><rect x="4" y="0" width="2" height="2.5"/><rect x="22" y="0" width="2" height="2.5"/><rect x="4" y="21.5" width="2" height="2.5"/><rect x="22" y="21.5" width="2" height="2.5"/></g></svg>
<svg style="left:2077px;top:833px;" width="22" height="25" viewBox="0 0 22 25"><path d="M5 11 L5 7 C5 3 7.5 1 11 1 C14.5 1 17 3 17 7 L17 11" fill="none" stroke="#8e8e8e" stroke-width="2.5"/><rect x="0.5" y="10" width="21" height="14.5" rx="2" fill="#8e8e8e"/><circle cx="11" cy="17" r="2" fill="#535353"/></svg>
<div class="t" style="left:2149px;top:835.22px;font-size:21px;color:#8e8e8e;font-weight:400;font-family:'Liberation Sans',sans-serif;transform:scaleX(0.9488);transform-origin:0 0;">Fill:</div>
<div class="a" style="left:2186px;top:828px;width:103px;height:35px;background:#4b4b4b;border:2px solid #616161;border-radius:6px;"></div>
<div class="a" style="left:2259px;top:829px;width:2px;height:33px;background:#5d5d5d;"></div>
<div class="t" style="left:2194px;top:835.22px;font-size:21px;color:#767676;font-weight:400;font-family:'Liberation Sans',sans-serif;transform:scaleX(0.9494);transform-origin:0 0;">100%</div>
<svg style="left:2268px;top:844px;" width="13" height="8" viewBox="0 0 13 8"><path d="M1 1 L6.5 7 L12 1" fill="none" stroke="#767676" stroke-width="2"/></svg>
<div class="a" style="left:1826px;top:877px;width:698px;height:563px;background:#535353;"></div>
<div class="a" style="left:1826px;top:909.5px;width:698px;height:1.5px;background:#434343;"></div>
<div class="a" style="left:1826px;top:959.3px;width:698px;height:2.0px;background:#434343;"></div>
<div class="a" style="left:1826px;top:1009px;width:698px;height:1.5px;background:#434343;"></div>
<div class="a" style="left:1826px;top:1075.3px;width:698px;height:1.7000000000000455px;background:#434343;"></div>
<div class="a" style="left:1826px;top:1125px;width:698px;height:2px;background:#434343;"></div>
<div class="a" style="left:1826px;top:1191px;width:698px;height:2px;background:#434343;"></div>
<div class="a" style="left:1826px;top:1257px;width:698px;height:2px;background:#434343;"></div>
<div class="a" style="left:1826px;top:1323px;width:698px;height:1.5px;background:#434343;"></div>
<div class="a" style="left:1826px;top:1389.5px;width:698px;height:1.8px;background:#434343;"></div>
<div class="a" style="left:1826px;top:875px;width:726px;height:2px;background:#4a4a4a;"></div>
<div class="a" style="left:1826px;top:877px;width:59px;height:32.5px;background:#b04646;"></div>
<div class="a" style="left:1826px;top:911px;width:59px;height:48.3px;background:#b04646;"></div>
<div class="a" style="left:1826px;top:961.3px;width:59px;height:47.7px;background:#b04646;"></div>
<div class="a" style="left:1885px;top:877px;width:1.8px;height:513px;background:#454545;"></div>
<div class="a" style="left:1826px;top:877px;width:698px;height:32.5px;overflow:hidden">
<svg style="left:17px;top:-4px;" width="24" height="24" viewBox="0 0 24 24"><path d="M1.5 1.5 L22.5 1.5 L22.5 22.5" fill="none" stroke="#9c3838" stroke-width="1.4"/><path d="M1.5 1 L1.5 22.5 L23 22.5" fill="none" stroke="#8a3030" stroke-width="1.8"/></svg>
<svg style="left:71px;top:-3px;" width="10" height="20" viewBox="0 0 10 20"><path d="M1.5 1 L8.5 10 L1.5 19" fill="none" stroke="#dedede" stroke-width="1.8"/></svg>
<div class="a" style="left:92px;top:-2px;width:28.5px;height:18.5px;background:#dedede;border-radius:2px"></div>
</div>
<div class="t" style="left:1969px;top:874.65px;font-size:20.5px;color:#e8e8e8;font-weight:400;font-family:'Liberation Sans',sans-serif;transform:scaleX(1.0104);transform-origin:0 0;">Joy!</div>
<svg style="left:1843px;top:923px;" width="24" height="24" viewBox="0 0 24 24"><path d="M1.5 1.5 L22.5 1.5 L22.5 22.5" fill="none" stroke="#9c3838" stroke-width="1.4"/><path d="M1.5 1 L1.5 22.5 L23 22.5" fill="none" stroke="#8a3030" stroke-width="1.8"/></svg>
<svg style="left:1897px;top:925px;" width="10" height="20" viewBox="0 0 10 20"><path d="M1.5 1 L8.5 10 L1.5 19" fill="none" stroke="#dedede" stroke-width="1.8"/></svg>
<svg style="left:1918px;top:922.5px;" width="29" height="23" viewBox="0 0 29 23"><path d="M2 0.5 L13.5 0.5 C14.5 0.5 15 1 15 2 L15 2.5 L2 2.5Z" fill="#dedede"/><rect x="0" y="4" width="28.5" height="18.5" rx="2" fill="#dedede"/></svg>
<div class="t" style="left:1969px;top:924.85px;font-size:20.5px;color:#e8e8e8;font-weight:400;font-family:'Liberation Sans',sans-serif;transform:scaleX(1.0397);transform-origin:0 0;">Merry Happy</div>
<svg style="left:1843px;top:973px;" width="24" height="24" viewBox="0 0 24 24"><path d="M1.5 1.5 L22.5 1.5 L22.5 22.5" fill="none" stroke="#9c3838" stroke-width="1.4"/><path d="M1.5 1 L1.5 22.5 L23 22.5" fill="none" stroke="#8a3030" stroke-width="1.8"/></svg>
<svg style="left:1897px;top:975px;" width="10" height="20" viewBox="0 0 10 20"><path d="M1.5 1 L8.5 10 L1.5 19" fill="none" stroke="#dedede" stroke-width="1.8"/></svg>
<svg style="left:1918px;top:972.5px;" width="29" height="23" viewBox="0 0 29 23"><path d="M2 0.5 L13.5 0.5 C14.5 0.5 15 1 15 2 L15 2.5 L2 2.5Z" fill="#dedede"/><rect x="0" y="4" width="28.5" height="18.5" rx="2" fill="#dedede"/></svg>
<div class="t" style="left:1969px;top:974.85px;font-size:20.5px;color:#e8e8e8;font-weight:400;font-family:'Liberation Sans',sans-serif;transform:scaleX(1.0756);transform-origin:0 0;">It's the most wonderful time of the year</div>
<svg style="left:1843px;top:1031px;" width="24" height="24" viewBox="0 0 24 24"><path d="M1.5 1.5 L22.5 1.5 L22.5 22.5" fill="none" stroke="#4b4b4b" stroke-width="1.4"/><path d="M1.5 1 L1.5 22.5 L23 22.5" fill="none" stroke="#444444" stroke-width="1.8"/></svg>
<div class="a" style="left:1894px;top:1019px;width:64px;height:48px;background:#333;"></div>
<div class="a" style="left:1896px;top:1021px;width:60px;height:44px;background-color:#fff;background-image:linear-gradient(45deg,#cdcdcd 25%,transparent 25%,transparent 75%,#cdcdcd 75%),linear-gradient(45deg,#cdcdcd 25%,transparent 25%,transparent 75%,#cdcdcd 75%);background-size:8px 8px;background-position:0 0,4px 4px"></div>
<div class="a" style="left:1930px;top:1038px;width:27px;height:29px;background:#333333;"></div>
<svg style="left:1932px;top:1040px;" width="24" height="25" viewBox="0 0 24 25"><path d="M6 2 L13 2 L17 6 L17 9 L10 9 L10 2Z" fill="#dcdcdc"/><rect x="1" y="14" width="9" height="10" fill="#dcdcdc"/><path d="M13 9 L19 9 L19 23 L12 23 L12 20 L16 20 L16 12 L13 12Z" fill="#dcdcdc"/></svg>
<div class="t" style="left:1975px;top:1032.65px;font-size:20.5px;color:#e8e8e8;font-weight:400;font-family:'Liberation Sans',sans-serif;transform:scaleX(1.0548);transform-origin:0 0;">brush stroke</div>
<svg style="left:1843.5px;top:1093.5px;" width="26" height="16" viewBox="0 0 26 16"><path d="M0.5 8 C4 3 8 0.3 13 0.3 C18 0.3 22 3 25.5 8 C22 13 18 15.7 13 15.7 C8 15.7 4 13 0.5 8Z" fill="#dedede"/><circle cx="13" cy="8" r="5.6" fill="#535353"/><circle cx="14.5" cy="6.2" r="1.4" fill="#dedede"/></svg>
<svg style="left:1893px;top:1095px;" width="18" height="11" viewBox="0 0 18 11"><path d="M1 1 L9.0 10 L17 1" fill="none" stroke="#dedede" stroke-width="1.8"/></svg>
<svg style="left:1917px;top:1088px;" width="30" height="24" viewBox="0 0 30 24"><path d="M2.2 1.2 L14 1.2 L14 5 L27.5 5 C28.3 5 28.8 5.5 28.8 6.3 L28.8 21.5 C28.8 22.3 28.3 22.8 27.5 22.8 L2.2 22.8 C1.4 22.8 0.9 22.3 0.9 21.5 L0.9 2.5 C0.9 1.7 1.4 1.2 2.2 1.2Z" fill="#dedede"/><path d="M3.3 3.5 L11.6 3.5 L11.6 7.5 L26.5 7.5 L26.5 12.3 L3.3 12.3 Z" fill="#535353"/></svg>
<div class="t" style="left:1968px;top:1090.85px;font-size:20.5px;color:#e8e8e8;font-weight:400;font-family:'Liberation Sans',sans-serif;transform:scaleX(1.0471);transform-origin:0 0;">Backgrounds (colorways)</div>
<svg style="left:1843.5px;top:1152px;" width="26" height="16" viewBox="0 0 26 16"><path d="M0.5 8 C4 3 8 0.3 13 0.3 C18 0.3 22 3 25.5 8 C22 13 18 15.7 13 15.7 C8 15.7 4 13 0.5 8Z" fill="#dedede"/><circle cx="13" cy="8" r="5.6" fill="#535353"/><circle cx="14.5" cy="6.2" r="1.4" fill="#dedede"/></svg>
<div class="a" style="left:1926px;top:1135px;width:64px;height:48px;background:#333333;"></div>
<div class="a" style="left:1928px;top:1137px;width:60px;height:44px;background:#192a17;"></div>
<div class="t" style="left:2006px;top:1149.25px;font-size:20.5px;color:#e8e8e8;font-weight:400;font-family:'Liberation Sans',sans-serif;transform:scaleX(1.0433);transform-origin:0 0;">Background 4</div>
<svg style="left:1843px;top:1213px;" width="24" height="24" viewBox="0 0 24 24"><path d="M1.5 1.5 L22.5 1.5 L22.5 22.5" fill="none" stroke="#4b4b4b" stroke-width="1.4"/><path d="M1.5 1 L1.5 22.5 L23 22.5" fill="none" stroke="#444444" stroke-width="1.8"/></svg>
<div class="a" style="left:1926px;top:1201px;width:64px;height:48px;background:#333333;"></div>
<div class="a" style="left:1928px;top:1203px;width:60px;height:44px;background:#640b0e;"></div>
<div class="t" style="left:2006px;top:1214.65px;font-size:20.5px;color:#e8e8e8;font-weight:400;font-family:'Liberation Sans',sans-serif;transform:scaleX(1.0433);transform-origin:0 0;">Background 3</div>
<svg style="left:1843px;top:1279px;" width="24" height="24" viewBox="0 0 24 24"><path d="M1.5 1.5 L22.5 1.5 L22.5 22.5" fill="none" stroke="#4b4b4b" stroke-width="1.4"/><path d="M1.5 1 L1.5 22.5 L23 22.5" fill="none" stroke="#444444" stroke-width="1.8"/></svg>
<div class="a" style="left:1926px;top:1267px;width:64px;height:48px;background:#333333;"></div>
<div class="a" style="left:1928px;top:1269px;width:60px;height:44px;background:#ffffff;"></div>
<div class="t" style="left:2006px;top:1280.45px;font-size:20.5px;color:#e8e8e8;font-weight:400;font-family:'Liberation Sans',sans-serif;transform:scaleX(1.0433);transform-origin:0 0;">Background 2</div>
<svg style="left:1843.5px;top:1349.5px;" width="26" height="16" viewBox="0 0 26 16"><path d="M0.5 8 C4 3 8 0.3 13 0.3 C18 0.3 22 3 25.5 8 C22 13 18 15.7 13 15.7 C8 15.7 4 13 0.5 8Z" fill="#dedede"/><circle cx="13" cy="8" r="5.6" fill="#535353"/><circle cx="14.5" cy="6.2" r="1.4" fill="#dedede"/></svg>
<div class="a" style="left:1926px;top:1333px;width:64px;height:48px;background:#333333;"></div>
<div class="a" style="left:1928px;top:1335px;width:60px;height:44px;background:#1e2735;"></div>
<div class="t" style="left:2006px;top:1347.15px;font-size:20.5px;color:#e8e8e8;font-weight:400;font-family:'Liberation Sans',sans-serif;transform:scaleX(1.0038);transform-origin:0 0;">Background 1</div>
<div class="a" style="left:2524px;top:877px;width:28px;height:513px;background:#4e4e4e;"></div>
<div class="a" style="left:2530px;top:1114px;width:20px;height:272px;background:#6a6a6a;border-radius:10px"></div>
<div class="a" style="left:1826px;top:1389.5px;width:726px;height:2px;background:#3e3e3e;"></div>
<div class="a" style="left:1826px;top:1391.5px;width:726px;height:48.5px;background:#535353;"></div>
<svg style="left:2148px;top:1408px;" width="29" height="15" viewBox="0 0 29 15"><g fill="none" stroke="#9a9a9a" stroke-width="2.2"><path d="M10 1.5 L7.5 1.5 C4 1.5 1.2 4 1.2 7 C1.2 10 4 12.5 7.5 12.5 L10 12.5"/><path d="M18 1.5 L20.5 1.5 C24 1.5 26.8 4 26.8 7 C26.8 10 24 12.5 20.5 12.5 L18 12.5"/></g><rect x="7.5" y="5.5" width="13" height="3.2" rx="1.5" fill="#9a9a9a"/></svg>
<div class="t" style="left:2207px;top:1401.30px;font-size:28px;color:#9a9a9a;font-weight:400;font-family:'Liberation Sans',sans-serif;font-style:italic;transform:scaleX(1.0100);transform-origin:0 0;">fx</div>
<svg style="left:2228px;top:1428px;" width="8" height="4" viewBox="0 0 8 4"><path d="M0 0 L7.5 0 L3.75 3.8Z" fill="#7a7a7a"/></svg>
<svg style="left:2259px;top:1405px;" width="25" height="20" viewBox="0 0 25 20"><rect x="0" y="0" width="25" height="19.2" rx="1.5" fill="#9e9e9e"/><circle cx="12.3" cy="9.5" r="6" fill="#535353"/></svg>
<svg style="left:2314px;top:1403px;" width="23" height="23" viewBox="0 0 23 23"><circle cx="11.5" cy="11.5" r="10" fill="none" stroke="#dcdcdc" stroke-width="1.6"/><path d="M18.6 4.4 A10 10 0 0 1 4.4 18.6Z" fill="#dcdcdc"/></svg>
<svg style="left:2336px;top:1428px;" width="9" height="5" viewBox="0 0 9 5"><path d="M0 0 L8.5 0 L4.25 4.5Z" fill="#f0f0f0"/></svg>
<svg style="left:2367px;top:1404px;" width="25" height="21" viewBox="0 0 25 21"><path d="M1.5 0.5 L12 0.5 C13 0.5 13.5 1 13.5 2 L1.5 2Z" fill="#dcdcdc"/><rect x="0" y="4" width="24" height="16.6" rx="1.5" fill="#dcdcdc"/></svg>
<svg style="left:2423px;top:1405px;" width="21" height="20" viewBox="0 0 21 20"><path d="M1 1 L20 1 L20 19 L8 19 L1 12Z" fill="#454545" stroke="#dcdcdc" stroke-width="2"/><path d="M1 12 L8 12 L8 19Z" fill="#dcdcdc"/></svg>
<svg style="left:2476px;top:1403px;" width="23" height="24" viewBox="0 0 23 24"><g fill="none" stroke="#9a9a9a" stroke-width="1.8"><path d="M0.5 4 L22.5 4"/><path d="M8 4 L8 1 L15 1 L15 4"/><path d="M3 6 L3.5 23 L19.5 23 L20 6"/><path d="M8 8 L8 20 M11.5 8 L11.5 20 M15 8 L15 20"/></g></svg>
<div class="a" style="left:2555px;top:46px;width:5px;height:222px;background:#2e2e2e;"></div>
<div class="a" style="left:2555px;top:268px;width:5px;height:15px;background:#6d8389;"></div>
<div class="a" style="left:2555px;top:283px;width:5px;height:32px;background:#8a6a50;"></div>
<div class="a" style="left:2555px;top:315px;width:5px;height:16px;background:#6d8389;"></div>
<div class="a" style="left:2555px;top:331px;width:5px;height:1171px;background:#d2d2d2;"></div>
<div class="a" style="left:391px;top:1441px;width:1554px;height:61px;background:linear-gradient(180deg,#c3c3c3,#dedede);border-left:1.5px solid #cfcfcf;border-right:1.5px solid #cfcfcf"></div>
<div class="a" style="left:391px;top:1454px;width:1554px;height:1.5px;background:#b4b4b4;"></div>
<div class="a" style="left:1987px;top:1441px;width:557px;height:61px;background:linear-gradient(180deg,#bdbdbd,#e0e0e0);border-left:1.5px solid #cfcfcf;border-right:1.5px solid #cfcfcf"></div>
<div class="t" style="left:413px;top:1464.84px;font-size:25px;color:#333333;font-weight:400;font-family:'Liberation Sans',sans-serif;transform:scaleX(1.0056);transform-origin:0 0;">Word count: 471</div>
<div class="t" style="left:889px;top:1464.84px;font-size:25px;color:#333333;font-weight:400;font-family:'Liberation Sans',sans-serif;transform:scaleX(1.0192);transform-origin:0 0;">Draft saved at 5:49:30 am. Last edited by Colleen Pastoor on November 2, 2019 at 4:49 pm</div>
<div class="a" style="left:0;top:1441px;width:400px;height:61px;overflow:hidden"><div class="a" style="left:0;top:-1441px;width:400px;height:1600px">
<svg style="left:46px;top:1427px;" width="33" height="33" viewBox="0 0 33 33"><circle cx="16.5" cy="16.5" r="16" fill="#c3cdd1"/><path d="M20 9 L11 16.5 L20 24Z" fill="#5a6d74"/></svg>
<div class="t" style="left:98px;top:1426.61px;font-size:30px;color:#c3cdd1;font-weight:400;font-family:'Liberation Sans',sans-serif;transform:scaleX(0.8894);transform-origin:0 0;">Collapse menu</div>
</div></div>
<div class="a" style="left:34px;top:1504px;width:453px;height:94px;background:#505356;border-radius:7px"></div>
<div class="a" style="left:489px;top:1504px;width:452px;height:94px;background:#505356;border-radius:7px"></div>
<div class="a" style="left:485px;top:1516px;width:1.8px;height:71px;background:#7e8184;"></div>
<div class="a" style="left:940px;top:1516px;width:1.8px;height:71px;background:#7e8184;"></div>
<div class="a" style="left:1393px;top:1516px;width:1.8px;height:71px;background:#7e8184;"></div>
<svg style="left:71px;top:1535px;" width="23" height="31" viewBox="0 0 23 31"><path d="M0.5 0.5 L15 0.5 L22.5 8 L22.5 30.5 L0.5 30.5Z" fill="#f2f2f2"/><path d="M15 0.5 L15 8 L22.5 8Z" fill="#c8c8c8"/><rect x="10" y="1" width="3.5" height="15" fill="#777"/><text x="11.5" y="26" font-family="Liberation Sans" font-size="6.5" text-anchor="middle" fill="#555">ZIP</text></svg>
<svg style="left:525px;top:1535px;" width="23" height="31" viewBox="0 0 23 31"><path d="M0.5 0.5 L15 0.5 L22.5 8 L22.5 30.5 L0.5 30.5Z" fill="#f2f2f2"/><path d="M15 0.5 L15 8 L22.5 8Z" fill="#c8c8c8"/><rect x="10" y="1" width="3.5" height="15" fill="#777"/><text x="11.5" y="26" font-family="Liberation Sans" font-size="6.5" text-anchor="middle" fill="#555">ZIP</text></svg>
<svg style="left:978px;top:1535px;" width="24" height="31" viewBox="0 0 24 31"><path d="M0.5 0.5 L15 0.5 L22.5 8 L22.5 30.5 L0.5 30.5Z" fill="#f2f2f2"/><path d="M15 0.5 L15 8 L22.5 8Z" fill="#c8c8c8"/><rect x="3" y="9" width="16" height="12" fill="#4a7ab8"/><path d="M3 21 L8 14 L12 18 L15 15 L19 21Z" fill="#e8c070"/><circle cx="16" cy="17" r="4" fill="none" stroke="#444" stroke-width="1.5"/><text x="11.5" y="28" font-family="Liberation Sans" font-size="6" text-anchor="middle" fill="#333">JPEG</text></svg>
<div class="t" style="left:125px;top:1542.30px;font-size:28px;color:#e8eaed;font-weight:400;font-family:'Liberation Sans',sans-serif;transform:scaleX(1.0805);transform-origin:0 0;">Holiday-Stock-....zip</div>
<div class="t" style="left:578px;top:1542.30px;font-size:28px;color:#e8eaed;font-weight:400;font-family:'Liberation Sans',sans-serif;transform:scaleX(1.0807);transform-origin:0 0;">MockUp-Post-....zip</div>
<div class="t" style="left:1033px;top:1542.30px;font-size:28px;color:#e8eaed;font-weight:400;font-family:'Liberation Sans',sans-serif;transform:scaleX(1.0927);transform-origin:0 0;">2020-free-print....j...</div>
<svg style="left:431px;top:1546px;" width="19" height="12" viewBox="0 0 19 12"><path d="M1.5 10.5 L9.5 2 L17.5 10.5" fill="none" stroke="#c8cacc" stroke-width="2.6"/></svg>
<svg style="left:885px;top:1546px;" width="19" height="12" viewBox="0 0 19 12"><path d="M1.5 10.5 L9.5 2 L17.5 10.5" fill="none" stroke="#c8cacc" stroke-width="2.6"/></svg>
<svg style="left:1338px;top:1546px;" width="19" height="12" viewBox="0 0 19 12"><path d="M1.5 10.5 L9.5 2 L17.5 10.5" fill="none" stroke="#c8cacc" stroke-width="2.6"/></svg>
<div class="a" style="left:2350px;top:1518px;width:164px;height:64px;background:#272727;border:1.5px solid #5a5d60;border-radius:9px"></div>
<div class="t" style="left:2383px;top:1537.41px;font-size:25.5px;color:#ffffff;font-weight:700;font-family:'Liberation Sans',sans-serif;transform:scaleX(0.9182);transform-origin:0 0;">Show All</div>
<svg style="left:2541px;top:1541px;" width="19" height="19" viewBox="0 0 19 19"><path d="M1.5 1.5 L17.5 17.5 M17.5 1.5 L1.5 17.5" stroke="#b8babc" stroke-width="2.6"/></svg>
</body></html>
